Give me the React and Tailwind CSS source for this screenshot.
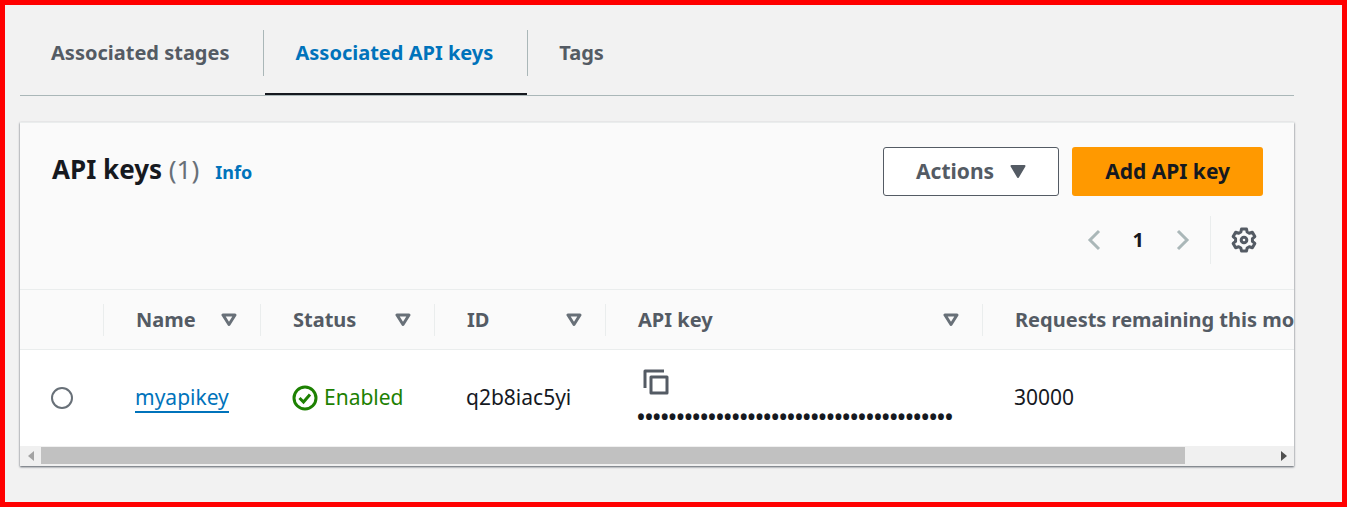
import { clsx } from 'clsx'

const tabs = [
  { id: 'stages', label: 'Associated stages' },
  { id: 'keys', label: 'Associated API keys' },
  { id: 'tags', label: 'Tags' },
]

const columns = [
  { id: 'name', label: 'Name', width: 'w-[157px]', sortable: true },
  { id: 'status', label: 'Status', width: 'w-[174px]', sortable: true },
  { id: 'id', label: 'ID', width: 'w-[171px]', sortable: true },
  { id: 'key', label: 'API key', width: 'w-[377px]', sortable: true },
  { id: 'requests', label: 'Requests remaining this month', width: 'w-[410px]' },
]

const apiKeys = [
  { id: 'q2b8iac5yi', name: 'myapikey', status: 'Enabled', masked: '•'.repeat(40), remaining: 30000 },
]

const CaretDown = () => (
  <svg width="16" height="13" viewBox="0 0 16 13" aria-hidden="true">
    <path d="M1.5 1h13L8 12z" fill="currentColor" stroke="currentColor" strokeWidth="2" strokeLinejoin="round" />
  </svg>
)

const SortIcon = () => (
  <svg width="16" height="14" viewBox="0 0 16 14" fill="none" aria-hidden="true">
    <path d="M2 2h12L8 11.5z" stroke="currentColor" strokeWidth="3" strokeLinejoin="round" />
  </svg>
)

const Chevron = ({ d }) => (
  <svg width="14" height="22" viewBox="0 0 14 22" fill="none" stroke="currentColor" strokeWidth="3" aria-hidden="true">
    <path d={d} />
  </svg>
)

const GearIcon = () => (
  <svg width="26" height="26" viewBox="0 0 24 24" fill="none" stroke="currentColor" strokeWidth="2.8" strokeLinejoin="round" aria-hidden="true">
    <path d="M9.7 1.8h4.6l.6 2.8 2 1.2 2.8-1 2.3 4-2.2 1.9v2.6l2.2 1.9-2.3 4-2.8-1-2 1.2-.6 2.8H9.7l-.6-2.8-2-1.2-2.8 1-2.3-4 2.2-1.9v-2.6L2 8.8l2.3-4 2.8 1 2-1.2z" />
    <circle cx="12" cy="12" r="2.6" />
  </svg>
)

const CheckIcon = () => (
  <svg width="26" height="26" viewBox="0 0 26 26" fill="none" stroke="currentColor" strokeWidth="3" aria-hidden="true">
    <circle cx="13" cy="13" r="11" />
    <path d="M7.5 13l4 4 6.5-7.5" />
  </svg>
)

const CopyIcon = () => (
  <svg width="26" height="26" viewBox="0 0 26 26" fill="none" stroke="currentColor" strokeWidth="3" strokeLinejoin="round" aria-hidden="true">
    <path d="M2 19V2h19" />
    <path d="M8 8h16v16H8z" />
  </svg>
)

export default function App() {
  return (
    <div className="min-h-screen border-5 border-[#ff0000] bg-[#f2f2f2] pl-[15px] pr-12 pb-9 text-xl text-[#16191f] font-['Noto_Sans',sans-serif]">
      <nav className="flex border-b border-[#aab7b8] pt-6" aria-label="Usage plan details">
        {tabs.map((tab, i) => (
          <div key={tab.id} className="relative flex">
            {i > 0 && <span className="mt-px h-[46px] w-px bg-[#aab7b8]" />}
            <a
              href={`#${tab.id}`}
              className={clsx(
                'block pl-[31px] pr-[34px] pt-[9px] pb-[27px] font-bold leading-[30px]',
                tab.id === 'keys' ? 'text-[#0073bb]' : 'text-[#545b64]',
              )}
            >
              {tab.label}
            </a>
            {tab.id === 'keys' && <span className="absolute bottom-0 left-0.5 right-0 h-0.5 bg-[#16191f]" />}
          </div>
        ))}
      </nav>

      <section className="mt-[26px] overflow-hidden border-t border-[#eaeded] bg-[#fafafa] shadow-[0_1px_2px_0_#545b64]">
        <header className="pl-8 pr-[31px] pt-6 pb-[25px]">
          <div className="flex items-start justify-between">
            <div className="flex items-baseline">
              <h2 className="text-[26px] font-bold leading-[44px]">
                API keys <span className="font-normal text-[#687078]">(1)</span>
              </h2>
              <a href="#info" className="ml-4 text-lg font-bold text-[#0073bb]">Info</a>
            </div>
            <div className="flex gap-[13px] text-[21px]">
              <button type="button" className="flex h-[49px] items-center gap-4 rounded-[3px] border border-[#545b64] bg-white px-8 font-bold text-[#545b64]">
                Actions
                <CaretDown />
              </button>
              <button type="button" className="h-[49px] rounded-[3px] bg-[#ff9900] px-[33px] font-bold">
                Add API key
              </button>
            </div>
          </div>

          <div className="mt-5 flex h-12 items-center justify-end">
            <button type="button" aria-label="Previous page" className="text-[#aab7b8]">
              <Chevron d="M12 2L3 11l9 9" />
            </button>
            <button type="button" aria-current="page" className="px-8 font-bold">1</button>
            <button type="button" aria-label="Next page" className="text-[#aab7b8]">
              <Chevron d="M2 2l9 9-9 9" />
            </button>
            <span className="ml-5 h-full w-px bg-[#eaeded]" />
            <button type="button" aria-label="Preferences" className="ml-5 mr-1.5 text-[#545b64]">
              <GearIcon />
            </button>
          </div>
        </header>

        <div className="overflow-hidden">
          <table className="w-[1372px] table-fixed text-left">
            <thead>
              <tr className="h-[60px] border-y border-[#eaeded] text-[#545b64]">
                <th className="w-[83px]" aria-label="Selection" />
                {columns.map((col) => (
                  <th key={col.id} className={clsx('p-0 font-bold', col.width)}>
                    <div className="flex h-8 items-center justify-between border-l border-[#eaeded] pl-8 pr-[23px] whitespace-nowrap">
                      {col.label}
                      {col.sortable && (
                        <button type="button" aria-label={`Sort by ${col.label}`} className="text-[#687078]">
                          <SortIcon />
                        </button>
                      )}
                    </div>
                  </th>
                ))}
              </tr>
            </thead>
            <tbody>
              {apiKeys.map((k) => (
                <tr key={k.id} className="h-24 bg-white text-[21px]">
                  <td className="pl-[31px]">
                    <input
                      type="radio"
                      name="api-key"
                      aria-label={`Select ${k.name}`}
                      className="block size-[22px] appearance-none rounded-full border-2 border-[#687078] bg-white"
                    />
                  </td>
                  <td className="pl-8">
                    <a href={`#${k.id}`} className="border-b-2 border-[#0073bb] text-[#0073bb]">{k.name}</a>
                  </td>
                  <td className="pl-8">
                    <span className="flex items-center gap-1.5 text-[#1d8102]">
                      <CheckIcon />
                      {k.status}
                    </span>
                  </td>
                  <td className="pl-8">{k.id}</td>
                  <td className="pl-8">
                    <button type="button" aria-label="Copy API key" className="ml-1.5 block pt-1 text-[#545b64]">
                      <CopyIcon />
                    </button>
                    <span className="mt-2 block font-bold leading-7">{k.masked}</span>
                  </td>
                  <td className="pl-8">{k.remaining}</td>
                </tr>
              ))}
            </tbody>
          </table>
        </div>

        {/* horizontal scrollbar */}
        <div className="flex h-5 items-center bg-[#f0f0f0]">
          <button type="button" aria-label="Scroll left" className="flex w-[21px] justify-center text-[#a3a3a3]">
            <svg width="6" height="10" viewBox="0 0 6 10"><path d="M6 0v10L0 5z" fill="currentColor" /></svg>
          </button>
          <div className="flex-1">
            <div className="h-[17px] w-13/14 bg-[#c1c1c1]" />
          </div>
          <button type="button" aria-label="Scroll right" className="flex w-[21px] justify-center text-[#505050]">
            <svg width="6" height="10" viewBox="0 0 6 10"><path d="M0 0v10l6-5z" fill="currentColor" /></svg>
          </button>
        </div>
      </section>
    </div>
  )
}
